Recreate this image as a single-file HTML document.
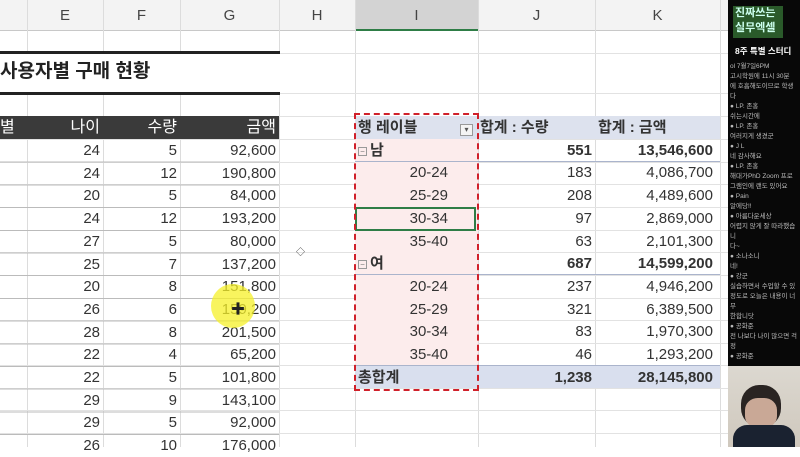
<!DOCTYPE html>
<html><head><meta charset="utf-8"><style>
*{margin:0;padding:0;box-sizing:border-box}
body{width:800px;height:447px;overflow:hidden;background:#fff;position:relative;font-family:"Liberation Sans","Noto Sans CJK KR",sans-serif;color:#333}
.a{position:absolute}
.vl{position:absolute;top:0;bottom:0;width:1px;background:#dcdcdc}
.hl{position:absolute;left:0;width:728px;height:1px;background:#e2e2e2}
.c{position:absolute;height:22px;line-height:23px;font-size:15px;text-align:right;white-space:nowrap}
.ch{position:absolute;top:0;height:30px;line-height:32px;font-size:15px;text-align:center;color:#444}
.m{display:inline-block;width:9px;height:9px;border:1px solid #999;font-size:8px;line-height:7px;text-align:center;color:#777;vertical-align:1px;margin-right:3px;font-weight:normal}
</style></head><body>
<div class="a" style="left:0;top:0;width:728px;height:31px;background:#f3f3f3;border-bottom:1px solid #c8c8c8"></div>
<div class="a" style="left:355px;top:0;width:123px;height:31px;background:#d3d3d3;border-bottom:2px solid #2e7d46"></div>
<div class="ch" style="left:27px;width:76px">E</div>
<div class="ch" style="left:103px;width:77px">F</div>
<div class="ch" style="left:180px;width:99px">G</div>
<div class="ch" style="left:279px;width:76px">H</div>
<div class="ch" style="left:355px;width:123px">I</div>
<div class="ch" style="left:478px;width:117px">J</div>
<div class="ch" style="left:595px;width:125px">K</div>
<div class="vl" style="left:27px"></div><div class="vl" style="left:103px"></div><div class="vl" style="left:180px"></div><div class="vl" style="left:279px"></div><div class="vl" style="left:355px"></div><div class="vl" style="left:478px"></div><div class="vl" style="left:595px"></div><div class="vl" style="left:720px"></div>
<div class="hl" style="top:53px"></div><div class="hl" style="top:93px"></div><div class="hl" style="top:116px"></div>
<div class="hl" style="top:139px"></div><div class="hl" style="top:162px"></div><div class="hl" style="top:184px"></div><div class="hl" style="top:207px"></div><div class="hl" style="top:230px"></div><div class="hl" style="top:252px"></div><div class="hl" style="top:275px"></div><div class="hl" style="top:298px"></div><div class="hl" style="top:320px"></div><div class="hl" style="top:343px"></div><div class="hl" style="top:365px"></div><div class="hl" style="top:388px"></div><div class="hl" style="top:410px"></div><div class="hl" style="top:433px"></div>
<div class="a" style="left:0;top:51px;width:280px;height:44px;background:#fff;border-top:3px solid #222;border-bottom:3px solid #222"></div>
<div class="a" style="left:0;top:60px;font-size:19px;font-weight:bold;color:#222;line-height:24px">사용자별 구매 현황</div>
<div class="a" style="left:0;top:116px;width:279px;height:23px;background:#3a3a3a"></div>
<div class="c" style="left:0;top:116px;width:12px;color:#fff;font-size:16px">별</div>
<div class="c" style="left:27px;top:116px;width:73px;color:#fff;font-size:16px">나이</div>
<div class="c" style="left:103px;top:116px;width:74px;color:#fff;font-size:16px">수량</div>
<div class="c" style="left:180px;top:116px;width:96px;color:#fff;font-size:16px">금액</div>
<div class="a" style="left:0;top:140px;width:279px;height:307px;background:repeating-linear-gradient(to bottom,transparent 0,transparent 21.7px,#bbb 21.7px,#bbb 22.7px)"></div>
<div id="ld"></div>
<div class="a" style="left:355px;top:116px;width:365px;height:23px;background:#dde2ee"></div>
<div class="a" style="left:355px;top:139px;width:123px;height:227px;background:#fcecec"></div>
<div class="a" style="left:355px;top:366px;width:365px;height:22px;background:#d9dfee"></div>
<div class="a" style="left:355px;top:161px;width:365px;height:1px;background:#aab4cc"></div>
<div class="a" style="left:355px;top:274px;width:365px;height:1px;background:#aab4cc"></div>
<div class="a" style="left:355px;top:365px;width:365px;height:1px;background:#aab4cc"></div>
<div class="a" style="left:355px;top:207px;width:121px;height:24px;border:2px solid #2e7d46"></div>
<div class="a" style="left:460px;top:124px;width:13px;height:12px;border:1px solid #999;background:#f4f4f4;font-size:8px;line-height:10px;text-align:center;color:#555">▾</div>
<div class="a" style="left:354px;top:113px;width:125px;height:278px;border:2px dashed #d0202a"></div>
<div id="pv"></div>
<div class="a" style="left:211px;top:284px;width:44px;height:44px;border-radius:50%;background:rgba(245,240,40,0.75)"></div>
<div class="a" style="left:231px;top:299px;font-size:14px;font-weight:bold;color:#222">✚</div>
<div class="a" style="left:296px;top:245px;font-size:9px">◇</div>
<div class="a" style="left:728px;top:0;width:72px;height:447px;background:#080808"></div>
<div class="a" style="left:733px;top:6px;width:50px;height:32px;background:#2a5a2a;color:#cfe;font-size:11px;font-weight:bold;line-height:15px;padding-left:2px">진짜쓰는<br>실무엑셀</div>
<div class="a" style="left:735px;top:45px;color:#fff;font-size:8.5px;font-weight:bold;white-space:nowrap">8주 특별 스터디</div>
<div class="a" style="left:730px;top:62px;width:70px;height:300px;overflow:hidden;color:#bbb;font-size:6.5px;line-height:10px">ol 7월7일6PM<br>고시학원에 11시 30분<br>에 호흡해도이므로 학생<br>다<br>● LP. 존홍<br>쉬는시간에<br>● LP. 존홍<br>여러지게 생겼군<br>● J L<br>네 감사해요<br>● LP. 존홍<br>해대가PhD Zoom 프로<br>그램인에 랜도 있어요<br>● Pain<br>알에당!!<br>● 아름다운세상<br>어렵지 않게 잘 따라했습니<br>다~<br>● 소나소니<br>네!<br>● 강군<br>실습하면서 수업할 수 있<br>정도로 오늘은 내용이 너무<br>한합니닷<br>● 공화준<br>전 나보다 나이 많으면 걱정<br>● 공화준<br>나보다 어리면 서오해 질<br>● 공화준<br>전 성별에 우스운세야</div>
<div class="a" style="left:728px;top:366px;width:72px;height:81px;background:linear-gradient(#dcd8d0,#cfc8bd)"></div>
<div class="a" style="left:741px;top:385px;width:40px;height:42px;border-radius:45%;background:#2a2422"></div>
<div class="a" style="left:745px;top:398px;width:32px;height:30px;border-radius:40%;background:#c9a896"></div>
<div class="a" style="left:733px;top:425px;width:62px;height:22px;border-radius:14px 14px 0 0;background:#1a2230"></div>
<script>
var ld=[[24,5,'92,600'],[24,12,'190,800'],[20,5,'84,000'],[24,12,'193,200'],[27,5,'80,000'],[25,7,'137,200'],[20,8,'151,800'],[26,6,'159,200'],[28,8,'201,500'],[22,4,'65,200'],[22,5,'101,800'],[29,9,'143,100'],[29,5,'92,000'],[26,10,'176,000']];
var h='';ld.forEach(function(r,i){var t=139+i*22.7;
h+='<div class="c" style="left:27px;top:'+t+'px;width:73px">'+r[0]+'</div><div class="c" style="left:103px;top:'+t+'px;width:74px">'+r[1]+'</div><div class="c" style="left:180px;top:'+t+'px;width:96px">'+r[2]+'</div>';});
document.getElementById('ld').innerHTML=h;
var M='<span class="m">−</span>';
var pv=[['행 레이블','합계 : 수량','합계 : 금액',2],[M+'남','551','13,546,600',1],['20-24','183','4,086,700',0],['25-29','208','4,489,600',0],['30-34','97','2,869,000',0],['35-40','63','2,101,300',0],[M+'여','687','14,599,200',1],['20-24','237','4,946,200',0],['25-29','321','6,389,500',0],['30-34','83','1,970,300',0],['35-40','46','1,293,200',0],['총합계','1,238','28,145,800',1]];
h='';pv.forEach(function(r,i){var t=116+i*22.7;var b=r[3]?'font-weight:bold;':'';
if(r[3]==2){h+='<div class="c" style="left:358px;top:'+t+'px;text-align:left;font-weight:bold;font-size:15px">'+r[0]+'</div><div class="c" style="left:480px;top:'+t+'px;text-align:left;font-weight:bold">'+r[1]+'</div><div class="c" style="left:598px;top:'+t+'px;text-align:left;font-weight:bold">'+r[2]+'</div>';return;}
var lt=r[3]?'left:358px;text-align:left;':'left:355px;width:93px;';
h+='<div class="c" style="'+lt+'top:'+t+'px;'+b+'">'+r[0]+'</div><div class="c" style="left:478px;top:'+t+'px;width:114px;'+b+'">'+r[1]+'</div><div class="c" style="left:595px;top:'+t+'px;width:118px;'+b+'">'+r[2]+'</div>';});
document.getElementById('pv').innerHTML=h;
</script>
</body></html>
